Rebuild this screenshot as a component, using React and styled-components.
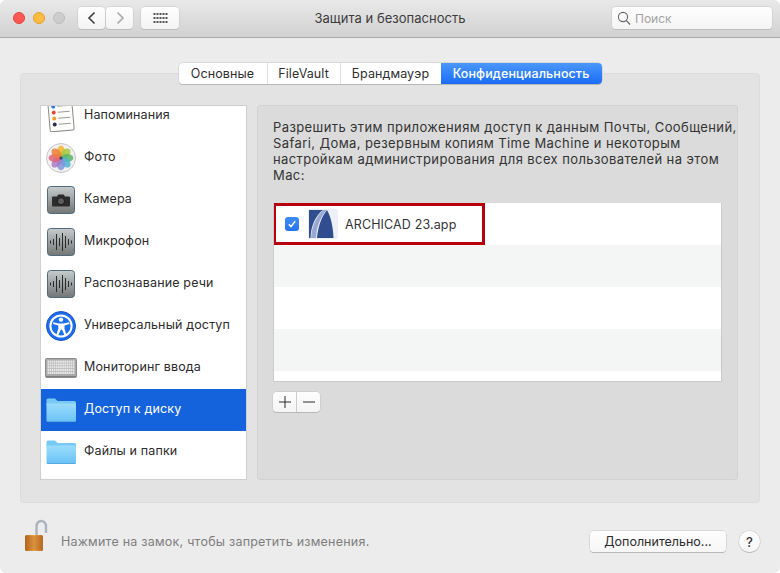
import React from 'react'
import styled, { createGlobalStyle } from 'styled-components'

const Global = createGlobalStyle`
  html, body { margin: 0; padding: 0; background: #fff; }
  body { font-family: Inter, "Liberation Sans", sans-serif; font-size: 12.5px; color: #2a2a2a; }
  * { box-sizing: border-box; }
`

const Window = styled.div`
  width: 780px;
  height: 573px;
  background: #ececec;
  border-radius: 6px;
  overflow: hidden;
  display: flex;
  flex-direction: column;
`

const TitleBar = styled.div`
  height: 38px;
  flex: none;
  display: grid;
  grid-template-columns: 1fr auto 1fr;
  align-items: center;
  padding: 0 8px 1px 8px;
  background: linear-gradient(#e9e9e9, #d1d1d1);
  border-bottom: 1px solid #ababab;
`

const LeftTools = styled.div`
  display: flex;
  align-items: center;
  padding-left: 5px;
`

const Light = styled.span`
  width: 12px;
  height: 12px;
  border-radius: 50%;
  margin-right: 8px;
  background: ${p => p.$color};
  border: 1px solid ${p => p.$edge};
`

const ToolButton = styled.div`
  width: ${p => p.$w}px;
  height: 22px;
  margin-left: ${p => p.$ml || 0}px;
  display: flex;
  align-items: center;
  justify-content: center;
  background: linear-gradient(#fefefe, #f3f3f3);
  border-radius: 4px;
  box-shadow: 0 0 0 0.5px #c6c6c6, 0 1px 0 #b4b4b4;
`

const Title = styled.div`
  font-size: 13px;
  color: #3c3c3c;
  letter-spacing: 0.03px;
`

const SearchBox = styled.div`
  justify-self: end;
  width: 160px;
  height: 22px;
  display: flex;
  align-items: center;
  gap: 4px;
  padding-left: 5px;
  background: linear-gradient(#fdfdfd, #f5f5f5);
  border-radius: 4px;
  box-shadow: 0 0 0 0.5px #c6c6c6, 0 1px 0 #b4b4b4;
  color: #a3a3a3;
  font-size: 12px;
`

const Body = styled.div`
  flex: 1;
  display: flex;
  flex-direction: column;
  padding: 25px 20px 0;
`

const Tabs = styled.div`
  align-self: center;
  display: flex;
  height: 21px;
  margin-bottom: -11px;
  position: relative;
  z-index: 1;
  border-radius: 4px;
  background: #fff;
  box-shadow: 0 0 0 0.5px #c4c4c4, 0 1px 0 #adadad;
  overflow: hidden;
`

const Tab = styled.div`
  width: ${p => p.$w}px;
  display: flex;
  align-items: center;
  justify-content: center;
  font-size: 12.5px;
  letter-spacing: 0.1px;
  color: ${p => (p.$active ? '#fff' : '#2f2f2f')};
  font-weight: ${p => (p.$active ? 500 : 400)};
  background: ${p => (p.$active ? 'linear-gradient(#4b97fb, #1a6cf6)' : 'transparent')};
  border-right: ${p => (p.$sep ? '1px solid #dedede' : 'none')};
`

const Panel = styled.div`
  height: 430px;
  flex: none;
  display: flex;
  gap: 10px;
  padding: 31px 21px 22px 19px;
  background: #e3e3e3;
  border: 1px solid #dcdcdc;
  border-radius: 4px;
`

const SideList = styled.div`
  width: 207px;
  flex: none;
  background: #fff;
  border: 1px solid #cfcfcf;
  overflow: hidden;
`

const SideScroll = styled.div`
  margin-top: -11px;
`

const SideRow = styled.div`
  height: 42px;
  display: flex;
  align-items: center;
  background: ${p => (p.$selected ? '#1463dc' : 'transparent')};
  color: ${p => (p.$selected ? '#fff' : '#2c2c2c')};
  font-size: 12.5px;
  letter-spacing: 0.15px;
`

const IconSlot = styled.div`
  width: 40px;
  margin-right: 3px;
  flex: none;
  display: flex;
  align-items: center;
  justify-content: center;
`

const SideLabel = styled.span`
  margin-bottom: 3px;
`

const Detail = styled.div`
  flex: 1;
  min-width: 0;
  padding: 13px 15px 0 15px;
  background: #dbdbdb;
  border: 1px solid #d2d2d2;
  border-radius: 3px;
`

const Intro = styled.div`
  font-size: 13px;
  letter-spacing: 0.4px;
  line-height: 16px;
  color: #333;
  height: 84px;
  white-space: nowrap;
`

const AppTable = styled.div`
  position: relative;
  height: 179px;
  background: #fff;
  border: 1px solid #cbcbcb;
  border-top: none;
  overflow: hidden;
`

const AppRow = styled.div`
  height: 42px;
  display: flex;
  align-items: center;
  padding-left: 11px;
  background: ${p => (p.$alt ? '#f4f5f5' : '#fff')};
`

const Check = styled.span`
  width: 14px;
  height: 14px;
  flex: none;
  margin-right: 9px;
  border-radius: 3px;
  background: linear-gradient(#3f8bf8, #2774f2);
  display: flex;
  align-items: center;
  justify-content: center;
`

const AppName = styled.span`
  margin-left: 7px;
  font-size: 12.5px;
  letter-spacing: 0.13px;
  color: #333;
`

const Highlight = styled.div`
  position: absolute;
  left: -1px;
  top: 0;
  width: 212px;
  height: 42px;
  border: 3px solid #b8000d;
`

const PlusMinus = styled.div`
  display: flex;
  width: 47px;
  height: 20px;
  margin-top: 10px;
  background: linear-gradient(#fdfdfd, #f4f4f4);
  border-radius: 4px;
  box-shadow: 0 0 0 0.5px #c2c2c2, 0 1px 0 #b0b0b0;
`

const PMButton = styled.div`
  flex: 1;
  display: flex;
  align-items: center;
  justify-content: center;
  border-right: ${p => (p.$sep ? '1px solid #cdcdcd' : 'none')};
`

const Footer = styled.div`
  flex: 1;
  display: flex;
  align-items: flex-start;
  padding-top: 16px;
`

const LockWrap = styled.div`
  width: 30px;
  margin: 0 7px 0 4px;
  flex: none;
`

const Hint = styled.div`
  flex: 1;
  margin-top: 15px;
  font-size: 12.5px;
  letter-spacing: 0.23px;
  color: #7e7e7e;
`

const MoreButton = styled.div`
  width: 136px;
  height: 21px;
  margin-top: 12px;
  display: flex;
  align-items: center;
  justify-content: center;
  background: linear-gradient(#fefefe, #f6f6f6);
  border-radius: 4px;
  box-shadow: 0 0 0 0.5px #c4c4c4, 0 1px 0 #adadad;
  font-size: 12.5px;
  color: #2c2c2c;
`

const HelpButton = styled.div`
  width: 21px;
  height: 21px;
  margin: 12px 0 0 13px;
  border-radius: 50%;
  display: flex;
  align-items: center;
  justify-content: center;
  background: linear-gradient(#fefefe, #f6f6f6);
  box-shadow: 0 0 0 0.5px #c4c4c4, 0 1px 0 #adadad;
  font-size: 13px;
  font-weight: 500;
  color: #333;
`

const Chevron = ({ d, color, w = 1.6 }) => (
  <svg width="12" height="16" viewBox="0 0 12 16">
    <path d={d} fill="none" stroke={color} strokeWidth={w} />
  </svg>
)

const GridDots = () => (
  <svg width="15" height="11" viewBox="0 0 15 11">
    {[0, 1, 2].map(r =>
      [0, 1, 2, 3, 4].map(c => (
        <rect key={`${r}-${c}`} x={c * 3 + 0.5} y={r * 4} width="2" height="2" fill="#555" />
      ))
    )}
  </svg>
)

const Lens = () => (
  <svg width="14" height="15" viewBox="0 0 14 15">
    <circle cx="6" cy="6" r="4.6" fill="none" stroke="#666" strokeWidth="1.1" />
    <path d="M9.4 9.6L13 13.5" stroke="#666" strokeWidth="1.3" />
  </svg>
)

const RemindersIcon = () => (
  <svg width="30" height="32" viewBox="0 0 30 32">
    <g transform="rotate(-5 15 16)">
      <rect x="3" y="1" width="24" height="30" rx="1.5" fill="#fdfdfb" stroke="#8a8a85" />
      {[
        [6, '#2f7ce8'],
        [12, '#e8432f'],
        [18, '#f29a2e'],
        [24, '#2b2f4a']
      ].map(([y, c]) => (
        <g key={y}>
          <circle cx="8" cy={y} r="2" fill={c} />
          <path d={`M12 ${y}H24`} stroke="#9a9a9a" strokeWidth="1" />
        </g>
      ))}
    </g>
  </svg>
)

const petals = ['#f3b52e', '#a7c93c', '#57b668', '#4fb3d6', '#7e95dc', '#a97cc4', '#e0607a', '#ee7f3b']

const PhotosIcon = () => (
  <svg width="30" height="30" viewBox="0 0 30 30">
    <circle cx="15" cy="15" r="14.5" fill="#f1f1f1" stroke="#c4c4c4" />
    {petals.map((c, i) => (
      <ellipse key={c} cx="15" cy="8.8" rx="4" ry="6.2" fill={c} opacity="0.85" transform={`rotate(${i * 45} 15 15)`} />
    ))}
    <circle cx="15" cy="15" r="1.6" fill="#3a3f66" />
  </svg>
)

const Tile = ({ id, children }) => (
  <svg width="28" height="28" viewBox="0 0 28 28">
    <defs>
      <linearGradient id={id} x1="0" y1="0" x2="0" y2="1">
        <stop offset="0" stopColor="#c6cccd" />
        <stop offset="1" stopColor="#727675" />
      </linearGradient>
    </defs>
    <rect x="0.5" y="0.5" width="27" height="27" rx="3" fill={`url(#${id})`} stroke="#4f6a7d" />
    {children}
  </svg>
)

const CameraIcon = () => (
  <Tile id="tileCam">
    <path
      d="M6 10.5h4l1.3-2h5.4l1.3 2h4a1 1 0 0 1 1 1v8a1 1 0 0 1-1 1H6a1 1 0 0 1-1-1v-8a1 1 0 0 1 1-1z"
      fill="#2c2c2c"
    />
    <circle cx="14" cy="15.2" r="3.6" fill="#5c5c5c" stroke="#191919" strokeWidth="1" />
  </Tile>
)

const waveBars = [[3.500, 1.500], [6.500, 3], [9.500, 8], [12.500, 4], [15.500, 9], [18.500, 6], [21.500, 3], [24.500, 1.500]]

const MicIcon = ({ id }) => (
  <Tile id={id}>
    {waveBars.map(([x, h]) => (
      <path key={x} d={`M${x} ${14 - h}V${14 + h}`} stroke="#2a2a2a" strokeWidth="1" />
    ))}
  </Tile>
)

const AccessIcon = () => (
  <svg width="30" height="30" viewBox="0 0 30 30">
    <circle cx="15" cy="15" r="14.5" fill="#1e6cf0" stroke="#1a56c4" />
    <circle cx="15" cy="15" r="10.600" fill="#1c72ee" stroke="#fff" strokeWidth="2" />
    <circle cx="15" cy="8.600" r="2.200" fill="#fff" />
    <path
      d="M7 11.200l5.500 1.300h5l5.500-1.300.5 1.700-5 1.700v3.200l2 6.200-1.800.6-2.800-6.200h-1l-2.800 6.200-1.800-.6 2-6.200v-3.200l-5-1.700z"
      fill="#fff"
    />
  </svg>
)

const KeyboardIcon = () => (
  <svg width="32" height="20" viewBox="0 0 32 20">
    <rect x="0.5" y="0.5" width="31" height="19" rx="1" fill="#a9a9a9" stroke="#8c8c8c" />
    {[0, 1, 2, 3, 4].map(r =>
      Array.from({ length: 13 }).map((_, c) => (
        <rect key={`${r}-${c}`} x={2.500 + c * 2.100} y={2.500 + r * 2.800} width="1.700" height="2.300" fill="#e9e9e9" />
      ))
    )}
    <path d="M1 18.500h30" stroke="#7f7f7f" />
  </svg>
)

const FolderIcon = ({ id }) => (
  <svg width="30" height="24" viewBox="0 0 30 24">
    <defs>
      <linearGradient id={id} x1="0" y1="0" x2="0" y2="1">
        <stop offset="0" stopColor="#9adcfc" />
        <stop offset="1" stopColor="#6cc3f6" />
      </linearGradient>
    </defs>
    <path d="M0.500 2a1.500 1.500 0 0 1 1.500-1.500h7l2.500 2.500h17a1.500 1.500 0 0 1 1.500 1.500v3H0.500z" fill="#78c9f6" />
    <path
      d="M0.500 5.500H29a1 1 0 0 1 1 1v16a1 1 0 0 1-1 1H1.500a1 1 0 0 1-1-1z"
      fill={`url(#${id})`}
    />
    <path d="M1 23.500h28.500" stroke="#56a8e3" />
  </svg>
)

const ArchicadIcon = () => (
  <svg width="30" height="30" viewBox="0 0 30 30">
    <rect width="30" height="30" rx="2" fill="#eef0f7" />
    <path d="M1 1h14C8 6 3 16 2.500 29H1z" fill="#2f4d8f" />
    <path d="M19 1c4 7 6 17 6.500 28H9c1-12 5-22 10-28z" fill="#2f4d8f" />
    <path d="M15.500 1h3C12 9 8.500 18 8 29H3C4 16 9 6 15.500 1z" fill="#9aa9d2" />
  </svg>
)

const LockIcon = () => (
  <svg width="26" height="33" viewBox="0 0 26 33">
    <defs>
      <linearGradient id="lockBody" x1="0" y1="0" x2="1" y2="0">
        <stop offset="0" stopColor="#b5651d" />
        <stop offset="0.5" stopColor="#eda24a" />
        <stop offset="1" stopColor="#b96a22" />
      </linearGradient>
    </defs>
    <path d="M12.500 17V7.500c0-3.500 2.300-5.500 4.700-5.500s4.800 2 4.800 5.500V14" fill="none" stroke="#a9b4bd" strokeWidth="2.400" />
    <rect x="1" y="16" width="18" height="16" rx="1.500" fill="url(#lockBody)" />
    {[18, 20, 22, 24, 26, 28, 30].map(y => (
      <path key={y} d={`M1 ${y}H19`} stroke="#a9601e" strokeWidth="0.500" />
    ))}
  </svg>
)

const sideItems = [
  { label: 'Напоминания', icon: <RemindersIcon /> },
  { label: 'Фото', icon: <PhotosIcon /> },
  { label: 'Камера', icon: <CameraIcon /> },
  { label: 'Микрофон', icon: <MicIcon id="tileMic" /> },
  { label: 'Распознавание речи', icon: <MicIcon id="tileSpeech" /> },
  { label: 'Универсальный доступ', icon: <AccessIcon /> },
  { label: 'Мониторинг ввода', icon: <KeyboardIcon /> },
  { label: 'Доступ к диску', icon: <FolderIcon id="folderDisk" />, selected: true },
  { label: 'Файлы и папки', icon: <FolderIcon id="folderFiles" /> }
]

export default function App() {
  return (
    <>
      <Global />
      <Window>
        <TitleBar>
          <LeftTools>
            <Light $color="#fc5753" $edge="#e0443e" />
            <Light $color="#fdbc40" $edge="#dea034" />
            <Light $color="#cdcdcd" $edge="#bcbcbc" />
            <ToolButton $w={27} $ml={5}>
              <Chevron d="M8.500 2.500L3 8l5.500 5.500" color="#3d3d3d" />
            </ToolButton>
            <ToolButton $w={27} $ml={1}>
              <Chevron d="M3.500 2.500L9 8l-5.500 5.500" color="#a8a8a8" />
            </ToolButton>
            <ToolButton $w={38} $ml={8}>
              <GridDots />
            </ToolButton>
          </LeftTools>
          <Title>Защита и безопасность</Title>
          <SearchBox>
            <Lens />
            Поиск
          </SearchBox>
        </TitleBar>
        <Body>
          <Tabs>
            <Tab $w={89} $sep>Основные</Tab>
            <Tab $w={73} $sep>FileVault</Tab>
            <Tab $w={100}>Брандмауэр</Tab>
            <Tab $w={161} $active>Конфиденциальность</Tab>
          </Tabs>
          <Panel>
            <SideList>
              <SideScroll>
                {sideItems.map(item => (
                  <SideRow key={item.label} $selected={item.selected}>
                    <IconSlot>{item.icon}</IconSlot>
                    <SideLabel>{item.label}</SideLabel>
                  </SideRow>
                ))}
              </SideScroll>
            </SideList>
            <Detail>
              <Intro>
                Разрешить этим приложениям доступ к данным Почты, Сообщений,
                <br />
                Safari, Дома, резервным копиям Time Machine и некоторым
                <br />
                настройкам администрирования для всех пользователей на этом
                <br />
                Mac:
              </Intro>
              <AppTable>
                <AppRow>
                  <Check>
                    <svg width="10" height="10" viewBox="0 0 10 10">
                      <path d="M1.800 5.200L4 7.500 8.200 2.200" fill="none" stroke="#fff" strokeWidth="1.500" />
                    </svg>
                  </Check>
                  <ArchicadIcon />
                  <AppName>ARCHICAD 23.app</AppName>
                </AppRow>
                <AppRow $alt />
                <AppRow />
                <AppRow $alt />
                <Highlight />
              </AppTable>
              <PlusMinus>
                <PMButton $sep>
                  <svg width="12" height="12" viewBox="0 0 12 12">
                    <path d="M6 0V12M0 6H12" stroke="#2a2a2a" strokeWidth="1" />
                  </svg>
                </PMButton>
                <PMButton>
                  <svg width="12" height="12" viewBox="0 0 12 12">
                    <path d="M0 6H12" stroke="#2a2a2a" strokeWidth="1" />
                  </svg>
                </PMButton>
              </PlusMinus>
            </Detail>
          </Panel>
          <Footer>
            <LockWrap>
              <LockIcon />
            </LockWrap>
            <Hint>Нажмите на замок, чтобы запретить изменения.</Hint>
            <MoreButton>Дополнительно...</MoreButton>
            <HelpButton>?</HelpButton>
          </Footer>
        </Body>
      </Window>
    </>
  )
}
